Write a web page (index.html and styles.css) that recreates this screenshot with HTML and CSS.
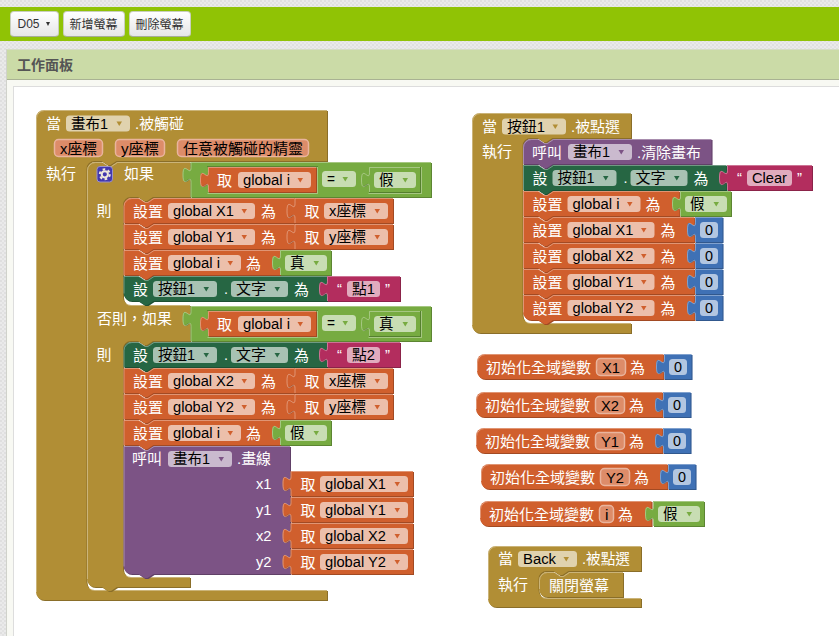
FILE: index.html
```html
<!DOCTYPE html>
<html lang="zh-Hant">
<head>
<meta charset="utf-8">
<title>工作面板</title>
<link rel="stylesheet" href="styles.css">
</head>
<body>
<header class="toolbar">
  <button class="btn btn-screen">D05<span class="caret"></span></button>
  <button class="btn">新增螢幕</button>
  <button class="btn">刪除螢幕</button>
</header>
<main class="panel">
  <h1 class="panel-title">工作面板</h1>
  <div class="panel-body">
    <div class="workspace">
      <svg id="blocks" class="blocks" width="825" height="549" viewBox="14 87 825 549"></svg>
    </div>
  </div>
</main>
<script src="blocks.js"></script>
</body>
</html>
```
FILE: styles.css
```css
* { box-sizing: border-box; }
body {
  margin: 0;
  height: 636px;
  overflow: hidden;
  padding-top: 7px;
  display: flex;
  flex-direction: column;
  background-color: #eaeaea;
  background-image:
    radial-gradient(circle at 1px 1px, #dfdfdf 0.8px, transparent 1px),
    radial-gradient(circle at 3px 3px, #e2e2e2 0.8px, transparent 1px);
  background-size: 4px 4px;
  font-family: "Liberation Sans", "Noto Sans CJK TC", sans-serif;
}
.toolbar {
  flex: none;
  height: 34px;
  padding: 4px 10px 0;
  display: flex;
  align-items: flex-start;
  gap: 4px;
  background: #90c305;
}
.btn {
  height: 26px;
  width: 62px;
  padding: 0 1px 1px 0;
  display: flex;
  align-items: center;
  justify-content: center;
  border: 1px solid #c9cfbd;
  border-bottom-color: #a6ad96;
  border-radius: 4px;
  background: linear-gradient(#fff, #e6e6e6);
  color: #333;
  font: 12px "Liberation Sans", "Noto Sans CJK TC", sans-serif;
  white-space: nowrap;
}
.btn-screen { width: 49px; gap: 6px; padding-right: 2px; }
.caret {
  border: 2.5px solid transparent;
  border-top: 4px solid #333;
  border-bottom: 0;
}
.panel {
  flex: 1;
  margin: 8px 0 0 6px;
  border-left: 1px solid #d0d2cb;
  border-top: 1px solid #d5dcc6;
  background: #f8f9f3;
}
.panel-title {
  margin: 0;
  height: 30px;
  padding: 0 10px 2px;
  display: flex;
  align-items: center;
  border-bottom: 1px solid #a9b293;
  background: #cbdba7;
  color: #555;
  font-size: 14px;
  font-weight: bold;
}
.panel-body { padding: 6px 0 0 6px; }
.workspace {
  height: 560px;
  border-top: 1px solid #ddd;
  border-left: 1px solid #ddd;
  background: #fff;
}
.blocks {
  display: block;
  font-family: "Liberation Sans", "Noto Sans CJK TC", sans-serif;
  font-size: 14.7px;
}
.label { fill: #fff; }
.field-text { fill: #000; }
.dropdown { fill: #fff; fill-opacity: 0.6; }
.param { fill: #dd8c69; stroke: #e9b49d; stroke-width: 1.5; }
.edge { fill: none; stroke: #fff; stroke-opacity: 0.34; stroke-width: 1; }
.shade { fill: #000; fill-opacity: 0.22; }
.gear-box { fill: #4238ae; stroke: #9a91ca; }
.gear { fill: none; stroke: #eee8dc; stroke-width: 2; }
.gear-teeth { fill: none; stroke: #eee8dc; stroke-width: 2; stroke-dasharray: 2.6 2.6; }
```
FILE: blocks.js
```js
const COLORS = {
  event: '#b18e35', variable: '#d05f2d', logic: '#77ab41', component: '#266643',
  text: '#b32d5e', method: '#7c5385', number: '#3f71b5'
};
const out = [];

function shape(d, kind, edge) {
  out.push(`<path d="${d}" fill="${COLORS[kind]}" transform="translate(.5,.5)"/><path class="shade" d="${d}" transform="translate(.5,.5)"/>`);
  out.push(`<path d="${d}" fill="${COLORS[kind]}" transform="translate(-.5,-.5)"/><path class="edge" d="${edge}"/>`);
}
function label(x, y, text, w) {
  out.push(`<text class="label" x="${x}" y="${y}" textLength="${w}" lengthAdjust="spacingAndGlyphs">${text}</text>`);
}
function fieldText(x, y, text, w) {
  out.push(`<text class="field-text" x="${x}" y="${y}" textLength="${w}" lengthAdjust="spacingAndGlyphs">${text}</text>`);
}
/* Editable or dropdown field; y is the top of its row. */
function field(x, y, w, text, tw, kind) {
  out.push(`<rect class="dropdown" x="${x}" y="${y + 5}" width="${w}" height="16" rx="3.5"/>`);
  fieldText(x + 5, y + 18, text, tw);
  if (kind) out.push(`<path d="M${x + w - 13.5} ${y + 11}h5.5l-2.75 4.5z" fill="${COLORS[kind]}"/>`);
}
function param(x, y, w, text, tw) {
  out.push(`<rect class="param" x="${x + .5}" y="${y + .5}" width="${w - 1}" height="17" rx="4"/>`);
  fieldText(x + 6, y + 14.5, text, tw);
}
/* Statement block; first and last round the left corners of a stack. */
function stmt(x, y, right, h, kind, first, last) {
  const X = x + .5, Y = y + .5, B = y + h - .5, R = right - .5;
  const top = (first ? `M${X} ${Y + 8}a8 8 0 0 1 8 -8` : `M${X} ${Y}`) + `H${X + 15}l6 4h3l6 -4H${R}`;
  const bottom = `V${B}H${X + 30}l-6 4h-3l-6 -4` + (last ? `H${X + 8}a8 8 0 0 1 -8 -8z` : `H${X}z`);
  shape(top + bottom, kind, `M${X} ${B - (last ? 8 : 0)}V${first ? Y + 8 : Y}` + top.replace('M', 'L'));
}
function value(x, y, right, kind, h = 26) {
  const X = x + .5, Y = y + .5;
  const tab = `V${Y + 20}c0 -10 -8 8 -8 -7.5s8 2.5 8 -7.5V${Y}`;
  shape(`M${X} ${Y}H${right - .5}V${y + h - .5}H${X}${tab}z`, kind,
    `M${X} ${y + h - 1}${tab}H${right - 1}`);
}
/* Event block wrapped round a statement stack. */
function hat(x, y, right, head, cx, foot, bottom) {
  const X = x + .5, Y = y + .5, C = cx, R = right - .5;
  shape(`M${X} ${Y + 8}a8 8 0 0 1 8 -8H${R}V${head - .5}H${C + 30}l-6 4h-3l-6 -4H${C + 8}a8 8 0 0 0 -8 8V${foot - 7.5}a8 8 0 0 0 8 8H${R}V${bottom - .5}H${X + 8}a8 8 0 0 1 -8 -8z`,
    'event', `M${X} ${bottom - 9}V${Y + 8}a8 8 0 0 1 8 -8H${R}M${C + 2} ${foot - 2}a8 8 0 0 0 6 2.5H${R}`);
}
function bool(x, y, text) {
  value(x, y, x + 52, 'logic');
  field(x + 5, y, 42, text, 14.5, 'logic');
}
function zero(x, y) {
  value(x, y, x + 28.5, 'number');
  field(x + 5, y, 18, '0', 8, '');
}
function str(x, y, text, tw, right) {
  value(x, y, right, 'text');
  label(x + 10, y + 18, '“', 5);
  field(x + 20, y, tw + 10, text, tw, '');
  label(right - 16, y + 18, '”', 5);
}
function setProp(x, y, button, first, last) {
  stmt(x - .5, y, x + 204, 26, 'component', first, last);
  label(x + 9, y + 18.5, '設', 15);
  field(x + 29, y, 64, button, 37, 'component');
  label(x + 100, y + 18, '.', 4);
  field(x + 107, y, 57, '文字', 30, 'component');
  label(x + 170, y + 18.5, '為', 15);
}
function setVar(x, y, name, first, last) {
  const short = name === 'i';
  stmt(x - .5, y, x + (short ? 157 : 172), 26, 'variable', first, last);
  label(x + 9, y + 18.5, '設置', 30);
  field(x + 44, y, short ? 73 : 87, 'global ' + name, short ? 47 : 61, 'variable');
  label(x + (short ? 122 : 137), y + 18.5, '為', 15);
}
function getVar(x, y, text, tw, fw) {
  value(x - .5, y, x + fw + 35, 'variable');
  label(x + 9.5, y + 18.5, '取', 15);
  field(x + 29, y, fw, text, tw, 'variable');
}
function compare(y, text) {
  value(190.5, y, 432, 'logic', 36);
  out.push(`<path class="shade" d="M207 ${y + 4}H318V${y + 5}H207z"/>`);
  out.push(`<path class="edge" d="M207.5 ${y + 31.5}H317.5V${y + 5}M368.5 ${y + 31.5}H421.5V${y + 5}"/>`);
  value(208, y + 5, 317, 'variable');
  label(217, y + 24, '取', 15);
  field(238, y + 5, 73, 'global i', 47, 'variable');
  field(322, y + 4, 34, '=', 8, 'logic');
  bool(369, y + 5, text);
  out.push(`<path d="M420.5 ${y + 5}V${y + 30.5}H369" fill="none" stroke="#55802e"/>`);
}

/* Canvas touched handler */
hat(36, 110, 328, 162, 87, 590, 601);
label(46, 129, '當', 15);
field(66, 110.5, 64, '畫布1', 37, 'event');
label(135, 129, '.被觸碰', 49);
param(54, 139, 49, 'x座標', 37);
param(115, 139, 50, 'y座標', 38);
param(177, 139, 132, '任意被觸碰的精靈', 120);
label(46, 179, '執行', 30);

const body = 'M87.5 170.5a8 8 0 0 1 8 -8H102.5l6 4h3l6 -4H190.5V197.5H153.5l-6 4h-3l-6 -4H131.5a8 8 0 0 0 -8 8V297.5a8 8 0 0 0 8 8H190.5V341.5H153.5l-6 4h-3l-6 -4H131.5a8 8 0 0 0 -8 8V569.5a8 8 0 0 0 8 8H190.5V587.5H117.5l-6 4h-3l-6 -4H95.5a8 8 0 0 1 -8 -8z';
shape(body, 'event', 'M87.5 579V170.5a8 8 0 0 1 8 -8H102.5l6 4h3l6 -4H190M126 303.5a8 8 0 0 0 6 2H190M126 575.5a8 8 0 0 0 6 2H190');
out.push('<rect class="gear-box" x="97" y="166.5" width="15.5" height="15.5" rx="3"/><circle class="gear" cx="104.8" cy="174.3" r="3.1"/><circle class="gear-teeth" cx="104.8" cy="174.3" r="5"/>');
label(124, 179, '如果', 30);
label(96.5, 216, '則', 15);
label(97, 324, '否則，如果', 75);
label(96.5, 360, '則', 15);

compare(162, '假');
[['X1', 'x座標', 198], ['Y1', 'y座標', 224]].forEach(([n, p, y], i) => {
  setVar(124, y, n, i === 0, false);
  getVar(295, y, p, 37, 64);
});
setVar(124, 250, 'i');
bool(280, 250, '真');
setProp(124, 276, '按鈕1', false, true);
str(327, 276, '點1', 23, 401);

compare(306, '真');
setProp(124, 342, '按鈕1', true, false);
str(327, 342, '點2', 23, 401);
[['X2', 'x座標', 368], ['Y2', 'y座標', 394]].forEach(([n, p, y]) => {
  setVar(124, y, n);
  getVar(295, y, p, 37, 64);
});
setVar(124, 420, 'i');
bool(280, 420, '假');
stmt(123.5, 446, 291, 129, 'method', false, true);
label(132, 464, '呼叫', 30);
field(168, 446, 64, '畫布1', 37, 'method');
label(237, 464, '.畫線', 34);
['x1', 'y1', 'x2', 'y2'].forEach((n, i) => {
  const y = 471 + i * 26;
  label(256, y + 18, n, 15.5);
  getVar(291, y, 'global ' + n.toUpperCase(), 61, 88);
});

/* Button clicked handler */
hat(472, 113, 632, 139, 523, 323, 334);
label(482, 132, '當', 15);
field(502, 113.5, 64, '按鈕1', 38, 'event');
label(571, 132, '.被點選', 49);
label(482, 157, '執行', 30);
stmt(523, 139, 712.5, 26, 'method', true, false);
label(532, 157.5, '呼叫', 30);
field(568, 139, 64, '畫布1', 37, 'method');
label(637, 157.5, '.清除畫布', 64);
setProp(523.5, 165, '按鈕1');
str(727, 165, 'Clear', 35, 813);
setVar(523.5, 191, 'i');
bool(680, 191, '假');
['X1', 'X2', 'Y1', 'Y2'].forEach((n, i) => {
  const y = 217 + i * 26;
  setVar(523.5, y, n, false, i === 3);
  zero(695, y);
});

/* Global variable declarations */
function declare(x, y, name) {
  const short = name === 'i', right = x + (short ? 173 : 188);
  shape(`M${x + .5} ${y + 8.5}a8 8 0 0 1 8 -8H${right - 1}V${y + 25.5}H${x + 8.5}a8 8 0 0 1 -8 -8z`, 'variable',
    `M${x + .5} ${y + 17}V${y + 8.5}a8 8 0 0 1 8 -8H${right - 1}`);
  label(x + 9, y + 18.5, '初始化全域變數', 105);
  param(x + 119, y + 4, short ? 15 : 30, name, short ? 3.5 : 18);
  label(x + (short ? 138 : 153), y + 18.5, '為', 15);
  if (short) bool(x + 173, y, '假');
  else zero(x + 187, y);
}
declare(477, 354, 'X1');
declare(476, 392, 'X2');
declare(476, 428, 'Y1');
declare(481, 464, 'Y2');
declare(480, 501, 'i');

/* Back button handler */
hat(488, 546, 642, 572, 539, 598, 608);
label(498, 564, '當', 15);
field(518, 546, 59, 'Back', 33, 'event');
label(582, 564, '.被點選', 48);
label(498, 590, '執行', 30);
const close = 'M539.5 580.5a8 8 0 0 1 8 -8H554.5l6 4h3l6 -4H623.5V597.5H547.5a8 8 0 0 1 -8 -8z';
shape(close, 'event', 'M539.5 589V580.5a8 8 0 0 1 8 -8H554.5l6 4h3l6 -4H623');
label(549, 591, '關閉螢幕', 60);

document.getElementById('blocks').innerHTML = out.join('');
```
